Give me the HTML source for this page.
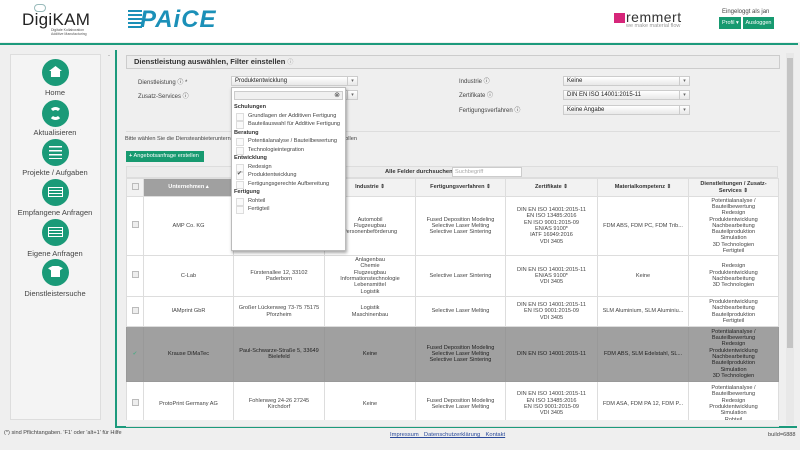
<!DOCTYPE html>
<html><head><meta charset="utf-8"><style>
*{margin:0;padding:0;box-sizing:border-box}
body{width:800px;height:450px;overflow:hidden;background:#efefef;font-family:"Liberation Sans",Arial,sans-serif;color:#333;position:relative}
.a{position:absolute}
.hdr{left:0;top:0;width:800px;height:42px;background:#fff}
.gl{background:#1c9a7c}
.side{left:10px;top:54px;width:91px;height:366px;background:#f4f4f4;border:1px solid #ddd}
.ic{width:27px;height:27px;border-radius:50%;background:#1a9a78;left:42px}
.lb{width:110px;left:0;text-align:center;font-size:7.5px;color:#444}
.sel{height:10px;border:1px solid #ccc;background:linear-gradient(#fff,#e8e8e8);font-size:6px;padding-left:3px;line-height:9px;color:#222}
.sel:after{content:"▾";position:absolute;right:0;top:0;width:9px;border-left:1px solid #ccc;text-align:center;font-size:5px;color:#666}
.fl{font-size:6px;color:#444}
table{border-collapse:collapse;table-layout:fixed}
td,th{border:1px solid #ddd;font-size:5.6px;text-align:center;vertical-align:middle;line-height:6.3px;color:#444;font-weight:normal}
th{background:#f2f2f2;font-weight:bold;color:#333}
.cb{display:inline-block;width:7px;height:7px;border:1px solid #bbb;background:#eee}
.sr td{background:#a0a0a0;color:#222;border-color:#999}
.dd{left:231px;top:87px;width:115px;height:164px;background:#fff;border:1px solid #bbb;box-shadow:1px 2px 3px rgba(0,0,0,.35);font-size:5.6px}
.dd .g{font-weight:bold;color:#333;padding-left:2px;height:8.5px;line-height:8.5px}
.dd .o{padding-left:16px;height:8.5px;line-height:8.5px;color:#444;position:relative}
.dd .o:before{content:"";position:absolute;left:4px;top:1px;width:6px;height:6px;border:1px solid #ddd;background:#fafafa}
</style></head><body>
<div class="a hdr"></div>
<div class="a" style="left:22px;top:10px;font-size:17px;color:#222;letter-spacing:.3px">DigiKAM</div>
<div class="a" style="left:51px;top:28px;font-size:3.5px;line-height:4px;color:#555">Digitale Kollaboration<br>Additive Manufacturing</div>
<div class="a" style="left:34px;top:4px;width:12px;height:8px;border:1px solid #9bb;border-radius:5px"></div>
<div class="a" style="left:128px;top:10px;width:14px;height:20px;background:repeating-linear-gradient(#1b90b8 0 2px,transparent 2px 4px)"></div>
<div class="a" style="left:140px;top:6px;font-size:24px;font-weight:bold;font-style:italic;color:#1b90b8;letter-spacing:1px">PAiCE</div>
<div class="a" style="left:614px;top:13px;width:11px;height:10px;background:#d6267a"></div>
<div class="a" style="left:626px;top:9px;font-size:14px;color:#333;letter-spacing:.5px">remmert</div>
<div class="a" style="left:626px;top:23px;font-size:5.5px;color:#999">we make material flow</div>
<div class="a" style="left:722px;top:9px;font-size:6px;color:#444">Eingeloggt als jan</div>
<div class="a" style="left:719px;top:17px;width:22px;height:12px;background:#179a70;color:#fff;font-size:5.5px;line-height:12px;padding-left:3px">Profil ▾</div>
<div class="a" style="left:743px;top:17px;width:31px;height:12px;background:#179a70;color:#fff;font-size:5.5px;line-height:12px;text-align:center">Ausloggen</div>
<div class="a gl" style="left:0;top:43px;width:798px;height:2px"></div>

<div class="a side"></div>
<div class="a ic" style="top:59px"></div><div class="a" style="left:49px;top:66px;width:13px;height:11px;background:#fff;clip-path:polygon(50% 0,100% 45%,85% 45%,85% 100%,15% 100%,15% 45%,0 45%)"></div>
<div class="a lb" style="top:88px">Home</div>
<div class="a ic" style="top:100px"></div><div class="a" style="left:49px;top:107px;width:13px;height:13px;border:3px solid #fff;border-radius:50%;border-left-color:transparent;border-right-color:transparent"></div>
<div class="a lb" style="top:128px">Aktualisieren</div>
<div class="a ic" style="top:139px"></div><div class="a" style="left:49px;top:146px;width:13px;height:13px;background:repeating-linear-gradient(#fff 0 1.5px,transparent 1.5px 4px)"></div>
<div class="a lb" style="top:168px">Projekte / Aufgaben</div>
<div class="a ic" style="top:179px"></div><div class="a" style="left:48px;top:187px;width:15px;height:10px;border:1.5px solid #fff;background:repeating-linear-gradient(transparent 0 2px,#fff 2px 3px)"></div>
<div class="a lb" style="top:208px">Empfangene Anfragen</div>
<div class="a ic" style="top:219px"></div><div class="a" style="left:48px;top:227px;width:15px;height:10px;border:1.5px solid #fff;background:repeating-linear-gradient(transparent 0 2px,#fff 2px 3px)"></div>
<div class="a lb" style="top:249px">Eigene Anfragen</div>
<div class="a ic" style="top:259px"></div><div class="a" style="left:48px;top:266px;width:15px;height:11px;background:#fff;clip-path:polygon(0 20%,30% 0,70% 0,100% 20%,80% 40%,80% 100%,20% 100%,20% 40%)"></div>
<div class="a lb" style="top:289px">Dienstleistersuche</div>

<div class="a" style="left:108px;top:53px;font-size:6px;color:#888">-</div>
<div class="a gl" style="left:115px;top:50px;width:2px;height:378px"></div>
<div class="a gl" style="left:115px;top:426px;width:682px;height:2px"></div>
<div class="a" style="left:786px;top:53px;width:8px;height:372px;background:#e8e8e8"></div>
<div class="a" style="left:787px;top:58px;width:6px;height:290px;background:#c4c4c4"></div>

<div class="a" style="left:126px;top:55px;width:654px;height:14px;border:1px solid #ccc;background:#ececec;font-size:7.5px;font-weight:bold;line-height:12px;padding-left:7px;color:#333">Dienstleistung auswählen, Filter einstellen <span style="font-weight:normal;color:#999;font-size:6px">ⓘ</span></div>
<div class="a fl" style="left:138px;top:77px">Dienstleistung ⓘ *</div>
<div class="a fl" style="left:138px;top:91px">Zusatz-Services ⓘ</div>
<div class="a sel" style="left:231px;top:76px;width:127px">Produktentwicklung</div>
<div class="a sel" style="left:340px;top:90px;width:18px"></div>
<div class="a fl" style="left:459px;top:76px">Industrie ⓘ</div>
<div class="a fl" style="left:459px;top:90px">Zertifikate ⓘ</div>
<div class="a fl" style="left:459px;top:105px">Fertigungsverfahren ⓘ</div>
<div class="a sel" style="left:563px;top:76px;width:127px">Keine</div>
<div class="a sel" style="left:563px;top:90px;width:127px">DIN EN ISO 14001:2015-11</div>
<div class="a sel" style="left:563px;top:105px;width:127px">Keine Angabe</div>
<div class="a" style="left:126px;top:131px;width:654px;border-top:1px solid #ddd"></div>
<div class="a fl" style="left:125px;top:136px;font-size:5.6px">Bitte wählen Sie die Diensteanbieterunternehmen aus, an die Sie die Anfrage schicken wollen</div>
<div class="a" style="left:126px;top:151px;width:78px;height:11px;background:#179a70;color:#fff;font-size:5.6px;line-height:11px;padding-left:3px"><b>+</b> Angebotsanfrage erstellen</div>

<div class="a" style="left:126px;top:166px;width:652px;height:12px;background:#ececec;border:1px solid #ddd"></div>
<div class="a" style="left:385px;top:169px;font-size:5.8px;font-weight:bold">Alle Felder durchsuchen:</div>
<div class="a" style="left:452px;top:167px;width:70px;height:10px;background:#fff;border:1px solid #ccc;font-size:5.6px;color:#aaa;padding-left:2px;line-height:9px">Suchbegriff</div>

<table class="a" style="left:126px;top:178px;width:652px">
<colgroup><col style="width:17px"><col style="width:90px"><col style="width:91px"><col style="width:91px"><col style="width:90px"><col style="width:92px"><col style="width:91px"><col style="width:90px"></colgroup>
<tr style="height:18px"><th><span class="cb"></span></th><th style="background:#a0a0a0;color:#fff">Unternehmen ▴</th><th></th><th>Industrie ⇕</th><th>Fertigungsverfahren ⇕</th><th>Zertifikate ⇕</th><th>Materialkompetenz ⇕</th><th>Dienstleitungen / Zusatz-Services ⇕</th></tr>
<tr style="height:59px;background:#fff"><td><span class="cb"></span></td><td>AMP Co. KG</td><td>Ruhrallee 42, 45138 Essen</td><td>Automobil<br>Flugzeugbau<br>Personenbeförderung</td><td>Fused Deposition Modeling<br>Selective Laser Melting<br>Selective Laser Sintering</td><td>DIN EN ISO 14001:2015-11<br>EN ISO 13485:2016<br>EN ISO 9001:2015-09<br>EN/AS 9100*<br>IATF 16949:2016<br>VDI 3405</td><td>FDM ABS, FDM PC, FDM Trib...</td><td>Potentialanalyse /<br>Bauteilbewertung<br>Redesign<br>Produktentwicklung<br>Nachbearbeitung<br>Bauteilproduktion<br>Simulation<br>3D Technologien<br>Fertigteil</td></tr>
<tr style="height:41px;background:#fff"><td><span class="cb"></span></td><td>C-Lab</td><td>Fürstenallee 12, 33102<br>Paderborn</td><td>Anlagenbau<br>Chemie<br>Flugzeugbau<br>Informationstechnologie<br>Lebensmittel<br>Logistik</td><td>Selective Laser Sintering</td><td>DIN EN ISO 14001:2015-11<br>EN/AS 9100*<br>VDI 3405</td><td>Keine</td><td>Redesign<br>Produktentwicklung<br>Nachbearbeitung<br>3D Technologien</td></tr>
<tr style="height:30px;background:#fff"><td><span class="cb"></span></td><td>IAMprint GbR</td><td>Großer Lückenweg 73-75 75175<br>Pforzheim</td><td>Logistik<br>Maschinenbau</td><td>Selective Laser Melting</td><td>DIN EN ISO 14001:2015-11<br>EN ISO 9001:2015-09<br>VDI 3405</td><td>SLM Aluminium, SLM Aluminiu...</td><td>Produktentwicklung<br>Nachbearbeitung<br>Bauteilproduktion<br>Fertigteil</td></tr>
<tr class="sr" style="height:55px"><td style="color:#5a8">✔</td><td>Krause DiMaTec</td><td>Paul-Schwarze-Straße 5, 33649<br>Bielefeld</td><td>Keine</td><td>Fused Deposition Modeling<br>Selective Laser Melting<br>Selective Laser Sintering</td><td>DIN EN ISO 14001:2015-11</td><td>FDM ABS, SLM Edelstahl, SL...</td><td>Potentialanalyse /<br>Bauteilbewertung<br>Redesign<br>Produktentwicklung<br>Nachbearbeitung<br>Bauteilproduktion<br>Simulation<br>3D Technologien</td></tr>
<tr style="height:45px;background:#fff"><td><span class="cb"></span></td><td>ProtoPrint Germany AG</td><td>Fohlenweg 24-26 27245<br>Kirchdorf</td><td>Keine</td><td>Fused Deposition Modeling<br>Selective Laser Melting</td><td>DIN EN ISO 14001:2015-11<br>EN ISO 13485:2016<br>EN ISO 9001:2015-09<br>VDI 3405</td><td>FDM ASA, FDM PA 12, FDM P...</td><td>Potentialanalyse /<br>Bauteilbewertung<br>Redesign<br>Produktentwicklung<br>Simulation<br>Rohteil</td></tr>
</table>
<div class="a" style="left:117px;top:420px;width:668px;height:6px;background:#efefef"></div>

<div class="a dd">
<div style="margin:3px 2px 3px;height:9px;border:1px solid #ccc;background:#f0f0f0;position:relative"><span style="position:absolute;right:2px;top:-1px;font-size:7px;color:#444">⊗</span></div>
<div class="g">Schulungen</div>
<div class="o">Grundlagen der Additiven Fertigung</div>
<div class="o">Bauteilauswahl für Additive Fertigung</div>
<div class="g">Beratung</div>
<div class="o">Potentialanalyse / Bauteilbewertung</div>
<div class="o">Technologieintegration</div>
<div class="g">Entwicklung</div>
<div class="o">Redesign</div>
<div class="o">Produktentwicklung<span style="position:absolute;left:5px;top:-1px;font-size:6px;color:#555">✔</span></div>
<div class="o">Fertigungsgerechte Aufbereitung</div>
<div class="g">Fertigung</div>
<div class="o">Rohteil</div>
<div class="o">Fertigteil</div>
</div>

<div class="a" style="left:4px;top:430px;font-size:5.6px;color:#444">(*) sind Pflichtangaben. 'F1' oder 'alt+1' für Hilfe</div>
<div class="a" style="left:390px;top:432px;font-size:5.8px;color:#2a4a9a;text-decoration:underline;word-spacing:1px">Impressum&nbsp; Datenschutzerklärung&nbsp; Kontakt</div>
<div class="a" style="left:768px;top:432px;font-size:5.6px;color:#444">build=6888</div>
</body></html>
